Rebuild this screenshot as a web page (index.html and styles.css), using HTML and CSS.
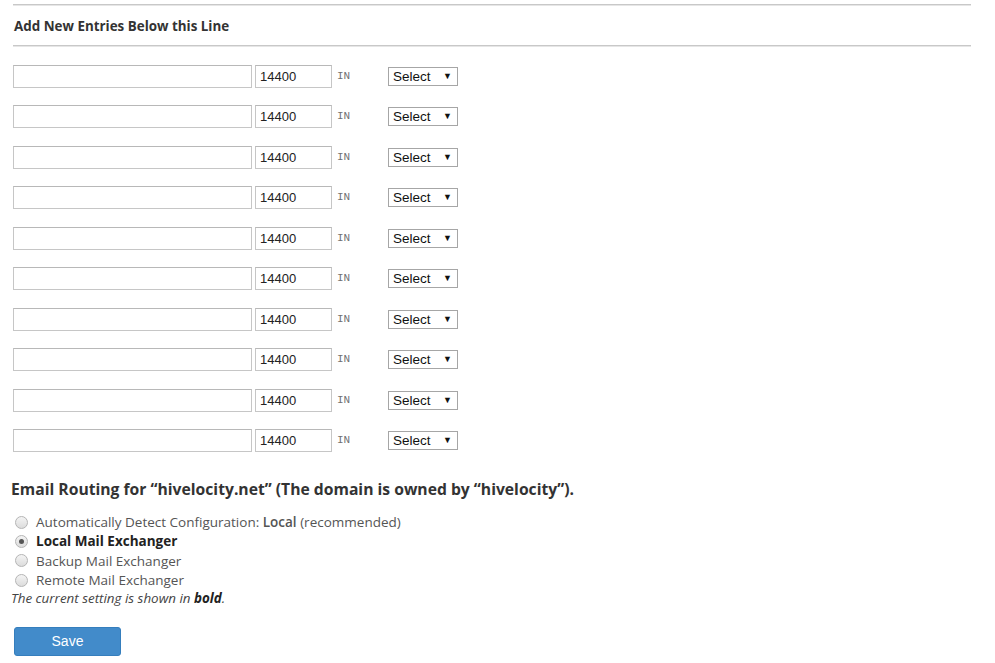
FILE: index.html
```html
<!DOCTYPE html>
<html>
<head>
<meta charset="utf-8">
<link rel="stylesheet" href="styles.css">
</head>
<body>
<div class="page">
  <div class="rule"></div>
  <h3 class="add-title">Add New Entries Below this Line</h3>
  <div class="rule"></div>
  <div class="entries">
    <div class="row"><input class="name" type="text"><input class="ttl" type="text" value="14400"><span class="cls">IN</span><div class="sel">Select<span class="arrow">▼</span></div></div>
    <div class="row"><input class="name" type="text"><input class="ttl" type="text" value="14400"><span class="cls">IN</span><div class="sel">Select<span class="arrow">▼</span></div></div>
    <div class="row"><input class="name" type="text"><input class="ttl" type="text" value="14400"><span class="cls">IN</span><div class="sel">Select<span class="arrow">▼</span></div></div>
    <div class="row"><input class="name" type="text"><input class="ttl" type="text" value="14400"><span class="cls">IN</span><div class="sel">Select<span class="arrow">▼</span></div></div>
    <div class="row"><input class="name" type="text"><input class="ttl" type="text" value="14400"><span class="cls">IN</span><div class="sel">Select<span class="arrow">▼</span></div></div>
    <div class="row"><input class="name" type="text"><input class="ttl" type="text" value="14400"><span class="cls">IN</span><div class="sel">Select<span class="arrow">▼</span></div></div>
    <div class="row"><input class="name" type="text"><input class="ttl" type="text" value="14400"><span class="cls">IN</span><div class="sel">Select<span class="arrow">▼</span></div></div>
    <div class="row"><input class="name" type="text"><input class="ttl" type="text" value="14400"><span class="cls">IN</span><div class="sel">Select<span class="arrow">▼</span></div></div>
    <div class="row"><input class="name" type="text"><input class="ttl" type="text" value="14400"><span class="cls">IN</span><div class="sel">Select<span class="arrow">▼</span></div></div>
    <div class="row"><input class="name" type="text"><input class="ttl" type="text" value="14400"><span class="cls">IN</span><div class="sel">Select<span class="arrow">▼</span></div></div>
  </div>

  <h2 class="routing-title">Email Routing for “hivelocity.net” (The domain is owned by “hivelocity”).</h2>
  <div class="options">
    <label class="opt"><span class="radio"></span><span>Automatically Detect Configuration: <b class="soft">Local</b> (recommended)</span></label>
    <label class="opt"><span class="radio checked"></span><b class="strong">Local Mail Exchanger</b></label>
    <label class="opt"><span class="radio"></span><span>Backup Mail Exchanger</span></label>
    <label class="opt"><span class="radio"></span><span>Remote Mail Exchanger</span></label>
  </div>
  <p class="note">The current setting is shown in <b>bold</b>.</p>
  <button class="save">Save</button>
</div>
</body>
</html>
```

FILE: styles.css
```css
* { box-sizing: border-box; }
html, body { margin: 0; padding: 0; background: #fff; }
body { font-family: "Open Sans", "Liberation Sans", sans-serif; color: #333; }

.page { padding: 4px 24px 0 11px; }

.rule {
  height: 2px;
  background: #c8c8c8;
  border-bottom: 1px solid #e6e6e6;
  margin-left: 2px;
}

.add-title {
  margin: 0;
  padding: 10px 0 0 3px;
  height: 39px;
  font-size: 13.4px;
  font-weight: 700;
  color: #333;
  line-height: 20px;
}

.entries { padding: 17.5px 0 0 2px; }

.row {
  height: 40.5px;
  display: flex;
  align-items: flex-start;
}

.row input {
  height: 23px;
  border: 1px solid #c6c6c6;
  border-top-color: #b8b8b8;
  background: #fff;
  padding: 0 4px;
  font-family: "Liberation Sans", Arial, sans-serif;
  font-size: 13px;
  color: #222;
  outline: none;
}
.row .name { width: 239px; margin-right: 3px; }
.row .ttl { width: 77px; }

.cls {
  font-family: "Liberation Mono", "DejaVu Sans Mono", monospace;
  font-size: 11px;
  color: #707070;
  margin-left: 5px;
  line-height: 22px;
  width: 51px;
}

.sel {
  margin-top: 2px;
  width: 70px;
  height: 19px;
  border: 1px solid #a6a6a6;
  background: #fff;
  font-family: "Liberation Sans", Arial, sans-serif;
  font-size: 13.5px;
  line-height: 17px;
  color: #111;
  padding-left: 4px;
  display: flex;
  justify-content: space-between;
}
.sel .arrow { font-size: 9px; padding-right: 5px; color: #111; }

.routing-title {
  margin: 8px 0 0 0;
  font-size: 15.7px;
  font-weight: 700;
  color: #333;
  line-height: 22px;
}

.options { margin-top: 13px; padding-left: 3px; }
.opt {
  display: flex;
  align-items: center;
  height: 19.3px;
  font-size: 13.5px;
  color: #555;
}
.radio {
  width: 13px;
  height: 13px;
  border-radius: 50%;
  border: 1px solid #b5b5b5;
  background: linear-gradient(#f4f4f4, #dcdcdc);
  margin: 0 8px 0 1px;
  position: relative;
}
.radio.checked::after {
  content: "";
  position: absolute;
  left: 3px; top: 3px;
  width: 5px; height: 5px;
  border-radius: 50%;
  background: #555;
}
.soft { font-weight: 600; color: #555; }
.strong { font-weight: 700; color: #222; }

.note {
  margin: 0;
  font-size: 13.4px;
  font-style: italic;
  color: #444;
  line-height: 17px;
}
.note b { color: #222; }

.save {
  display: block;
  margin: 20px 0 0 3px;
  width: 107px;
  height: 29px;
  border: 1px solid #357ebd;
  border-radius: 3px;
  background: #428bca;
  color: #fff;
  font-family: "Liberation Sans", Arial, sans-serif;
  font-size: 14px;
}
```
